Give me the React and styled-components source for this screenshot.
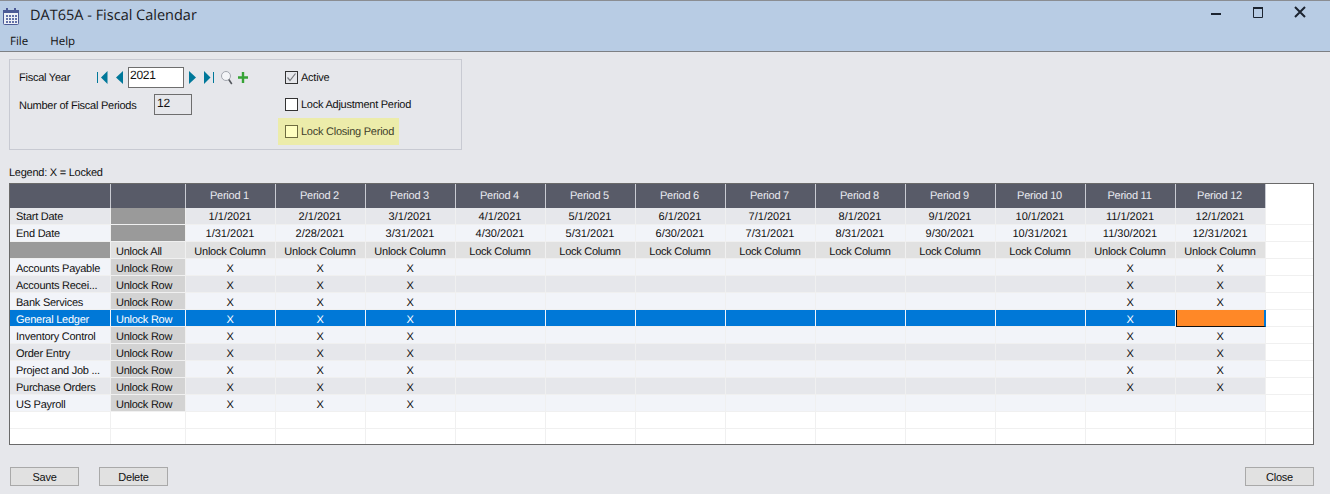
import React from 'react';
import styled, { createGlobalStyle } from 'styled-components';

const GlobalStyle = createGlobalStyle`
  html, body {
    margin: 0;
    padding: 0;
    background: #e6e7eb;
  }
  body {
    font-family: 'Liberation Sans', Arial, sans-serif;
    font-size: 11px;
    letter-spacing: -0.25px;
    text-rendering: geometricPrecision;
    color: #111;
  }
`;

const Page = styled.div`
  width: 1330px;
  height: 494px;
  overflow: hidden;
  display: flex;
  flex-direction: column;
`;

const Header = styled.div`
  height: 50px;
  background: #b8cce4;
  border-top: 1px solid #8a8d92;
  border-bottom: 1px solid #7d8084;
  flex: none;
`;

const TitleBar = styled.div`
  height: 30px;
  display: flex;
  align-items: center;
  padding-left: 3px;
`;

const Title = styled.div`
  font-family: 'Open Sans', sans-serif;
  font-size: 14.5px;
  letter-spacing: 0;
  margin: 0 0 2px 11px;
  color: #1a1a22;
  flex: 1;
`;

const WindowButton = styled.div`
  width: 42px;
  height: 24px;
  display: flex;
  align-items: center;
  justify-content: center;
  margin-bottom: 8px;
`;

const Menu = styled.div`
  display: flex;
  gap: 22px;
  padding: 3px 0 0 10px;
  font-family: 'Open Sans', sans-serif;
  font-size: 11.5px;
  letter-spacing: 0;
`;

const Panel = styled.section`
  margin: 7px 0 0 9px;
  width: 451px;
  height: 89px;
  border: 1px solid #c8cad2;
  display: flex;
  flex: none;
`;

const FieldColumn = styled.div`
  width: 268px;
  padding: 7px 0 0 9px;
  box-sizing: border-box;
  display: flex;
  flex-direction: column;
  gap: 6px;
`;

const FieldRow = styled.div`
  display: flex;
  align-items: center;
  height: 21px;
`;

const FieldLabel = styled.span`
  width: ${(p) => p.$width}px;
  margin-top: ${(p) => p.$drop || 0}px;
  flex: none;
`;

const NavGroup = styled.div`
  display: flex;
  align-items: center;
  width: 31px;
  gap: 8px;
  flex: none;
`;

const YearInput = styled.div`
  width: 56px;
  height: 21px;
  box-sizing: border-box;
  border: 1px solid #6e6e6e;
  background: #fff;
  padding-left: 1px;
  margin-right: 5px;
  font-size: 12px;
`;

const PeriodsInput = styled.div`
  width: 38px;
  height: 21px;
  box-sizing: border-box;
  border: 1px solid #6e6e6e;
  padding: 1px 0 0 2px;
  font-size: 12px;
`;

const IconSlot = styled.span`
  display: inline-flex;
  margin-right: ${(p) => p.$gap || 0}px;
`;

const CheckColumn = styled.div`
  padding-top: 4px;
  display: flex;
  flex-direction: column;
`;

const CheckRow = styled.label`
  height: 27px;
  width: 121px;
  white-space: nowrap;
  box-sizing: border-box;
  padding-left: 7px;
  display: flex;
  align-items: center;
  gap: 3px;
  background: ${(p) => (p.$highlight ? '#ececaa' : 'transparent')};
  color: ${(p) => (p.$highlight ? '#3f3f2a' : '#111')};
`;

const Box = styled.span`
  width: 11px;
  height: 11px;
  border: 1px solid ${(p) => (p.$highlight ? '#6e6c40' : '#333')};
  background: ${(p) => (p.$highlight ? '#ffffc0' : p.$checked ? '#e6e7eb' : '#fff')};
  display: inline-flex;
  flex: none;
`;

const Legend = styled.div`
  margin: 17px 0 0 9px;
  height: 16px;
  line-height: 13px;
`;

const Grid = styled.div`
  margin-left: 9px;
  width: 1303px;
  height: 260px;
  border: 1px solid #6a6a6a;
  background: #fff;
  overflow: hidden;
  flex: none;
`;

const COLUMNS = '101px 75px repeat(12, 90px) 47px';

const HeadRow = styled.div`
  display: grid;
  grid-template-columns: ${COLUMNS};
  height: 24px;
`;

const HeadCell = styled.div`
  background: #585b68;
  color: #e9eaf0;
  border-right: 1px solid #c9cbd2;
  padding-right: 2px;
  display: flex;
  align-items: center;
  justify-content: center;
`;

const Filler = styled.div`
  background: #fff;
  border-bottom: 1px solid #f0f0f0;
`;

const HeadFiller = styled.div`
  background: #fff;
`;

const Row = styled.div`
  display: grid;
  grid-template-columns: ${COLUMNS};
  height: 17px;
`;

const BodyRow = styled(Row)`
  > div {
    padding-top: 2px;
  }
`;

const rowColors = {
  odd: '#e6e7eb',
  even: '#f2f4f9',
  action: '#e1e1e1',
  selected: '#0078d7',
  blank: '#fff',
};

const Cell = styled.div`
  box-sizing: border-box;
  background: ${(p) => rowColors[p.$tone]};
  color: ${(p) => (p.$tone === 'selected' ? '#fff' : '#111')};
  border-right: 1px solid ${(p) => (p.$tone === 'selected' ? '#f2f4f9' : '#f0f0f0')};
  border-bottom: 1px solid #f0f0f0;
  padding: 1px 1px 0 0;
  text-align: center;
  line-height: 16px;
  white-space: nowrap;
  overflow: hidden;
`;

const DateCell = styled(Cell)`
  letter-spacing: 0;
`;

const NameCell = styled(Cell)`
  text-align: left;
  padding-left: 6px;
`;

const ActionCell = styled(Cell)`
  text-align: left;
  padding-left: 5px;
  background: ${(p) => (p.$tone === 'selected' || p.$tone === 'action' ? rowColors[p.$tone] : '#d3d3d3')};
`;

const MutedCell = styled(Cell)`
  background: #9a9a9a;
`;

const ActiveCell = styled.div`
  box-sizing: border-box;
  background: #ff8827;
  border-left: 1px solid #111;
  border-bottom: 1px solid #111;
  border-right: 2px solid #0078d7;
`;

const Footer = styled.div`
  display: flex;
  justify-content: space-between;
  padding: 22px 16px 0 10px;
`;

const FooterGroup = styled.div`
  display: flex;
  gap: 20px;
`;

const Button = styled.button`
  width: 69px;
  height: 19px;
  box-sizing: border-box;
  border: 1px solid #a9a9a9;
  background: #e1e1e1;
  color: #111;
  font: inherit;
  letter-spacing: inherit;
  padding: 0;
`;

const Calendar = () => (
  <svg width="16" height="17" viewBox="0 0 16 17">
    <rect x="0.5" y="2.5" width="15" height="14" rx="1" fill="#eef0f6" stroke="#4c5a96" />
    <rect x="0" y="2" width="16" height="3" fill="#4c5a96" />
    <rect x="3" y="0" width="2" height="3" fill="#4c5a96" />
    <rect x="11" y="0" width="2" height="3" fill="#4c5a96" />
    {[3, 6, 9, 12].flatMap((x) =>
      [7, 10, 13].map((y) => <rect key={`${x}-${y}`} x={x} y={y} width="2" height="2" fill="#6472a8" />)
    )}
  </svg>
);

const Minimize = () => (
  <svg width="12" height="12" viewBox="0 0 12 12">
    <rect x="1" y="7" width="10" height="2" fill="#1c2430" />
  </svg>
);

const Maximize = () => (
  <svg width="12" height="12" viewBox="0 0 12 12">
    <path d="M1.5 2.5h9v9h-9z" fill="none" stroke="#1c2430" />
    <rect x="1" y="1" width="10" height="2" fill="#1c2430" />
  </svg>
);

const CloseIcon = () => (
  <svg width="14" height="14" viewBox="0 0 14 14">
    <path d="M2 2l10 10M12 2L2 12" stroke="#1c2430" strokeWidth="2" />
  </svg>
);

const First = () => (
  <svg width="11" height="13" viewBox="0 0 11 13">
    <rect x="0" y="1" width="1" height="11" fill="#00789a" />
    <path d="M10.5 0v13L4 6.5z" fill="#00789a" />
  </svg>
);

const Prev = () => (
  <svg width="7" height="13" viewBox="0 0 7 13">
    <path d="M7 0v13L0 6.5z" fill="#00789a" />
  </svg>
);

const Next = () => (
  <svg width="7" height="13" viewBox="0 0 7 13">
    <path d="M0 0v13L7 6.5z" fill="#00789a" />
  </svg>
);

const Last = () => (
  <svg width="10" height="13" viewBox="0 0 10 13">
    <path d="M0 0v13L6.5 6.5z" fill="#00789a" />
    <rect x="9" y="1" width="1" height="11" fill="#00789a" />
  </svg>
);

const Search = () => (
  <svg width="12" height="14" viewBox="0 0 12 14">
    <circle cx="5" cy="5" r="4.5" fill="#f4f5f8" stroke="#a2a6ae" />
    <path d="M7.8 8.5l3 4.5" stroke="#55585e" strokeWidth="1.6" />
  </svg>
);

const Plus = () => (
  <svg width="10" height="11" viewBox="0 0 10 11">
    <path d="M3.8 0h2.4v4.3H10v2.4H6.2V11H3.8V6.7H0V4.3h3.8z" fill="#36a336" />
  </svg>
);

const Tick = () => (
  <svg width="11" height="11" viewBox="0 0 11 11">
    <path d="M1.5 5.5l2.5 3 5.5-7" fill="none" stroke="#77797e" strokeWidth="1.2" />
  </svg>
);

const periods = Array.from({ length: 12 }, (_, i) => i + 1);
const lastDays = [31, 28, 31, 30, 31, 30, 31, 31, 30, 31, 30, 31];
const unlocked = [1, 2, 3, 11, 12];

const apps = [
  { name: 'Accounts Payable', tone: 'even' },
  { name: 'Accounts Recei...', tone: 'odd' },
  { name: 'Bank Services', tone: 'even' },
  { name: 'General Ledger', tone: 'selected' },
  { name: 'Inventory Control', tone: 'even' },
  { name: 'Order Entry', tone: 'odd' },
  { name: 'Project and Job ...', tone: 'even' },
  { name: 'Purchase Orders', tone: 'odd' },
  { name: 'US Payroll', tone: 'even', locked: [1, 2, 3] },
];

export default function App() {
  return (
    <Page>
      <GlobalStyle />
      <Header>
        <TitleBar>
          <Calendar />
          <Title>DAT65A - Fiscal Calendar</Title>
          <WindowButton><Minimize /></WindowButton>
          <WindowButton><Maximize /></WindowButton>
          <WindowButton><CloseIcon /></WindowButton>
          <IconSlot $gap={9} />
        </TitleBar>
        <Menu>
          <span>File</span>
          <span>Help</span>
        </Menu>
      </Header>

      <Panel>
        <FieldColumn>
          <FieldRow>
            <FieldLabel $width={78}>Fiscal Year</FieldLabel>
            <NavGroup>
              <First />
              <Prev />
            </NavGroup>
            <YearInput>2021</YearInput>
            <IconSlot $gap={8}><Next /></IconSlot>
            <IconSlot $gap={7}><Last /></IconSlot>
            <IconSlot $gap={5}><Search /></IconSlot>
            <Plus />
          </FieldRow>
          <FieldRow>
            <FieldLabel $width={135} $drop={2}>Number of Fiscal Periods</FieldLabel>
            <PeriodsInput>12</PeriodsInput>
          </FieldRow>
        </FieldColumn>
        <CheckColumn>
          <CheckRow>
            <Box $checked><Tick /></Box>
            Active
          </CheckRow>
          <CheckRow>
            <Box />
            Lock Adjustment Period
          </CheckRow>
          <CheckRow $highlight>
            <Box $highlight />
            Lock Closing Period
          </CheckRow>
        </CheckColumn>
      </Panel>

      <Legend>Legend: X = Locked</Legend>

      <Grid>
        <HeadRow>
          <HeadCell />
          <HeadCell />
          {periods.map((p) => (
            <HeadCell key={p}>Period {p}</HeadCell>
          ))}
          <HeadFiller />
        </HeadRow>

        <Row>
          <NameCell $tone="odd">Start Date</NameCell>
          <MutedCell $tone="odd" />
          {periods.map((p) => (
            <DateCell key={p} $tone="odd">{p}/1/2021</DateCell>
          ))}
          <Filler />
        </Row>
        <Row>
          <NameCell $tone="even">End Date</NameCell>
          <MutedCell $tone="even" />
          {periods.map((p) => (
            <DateCell key={p} $tone="even">{p}/{lastDays[p - 1]}/2021</DateCell>
          ))}
          <Filler />
        </Row>
        <BodyRow>
          <MutedCell $tone="action" />
          <ActionCell $tone="action">Unlock All</ActionCell>
          {periods.map((p) => (
            <Cell key={p} $tone="action">
              {unlocked.includes(p) ? 'Unlock Column' : 'Lock Column'}
            </Cell>
          ))}
          <Filler />
        </BodyRow>

        {apps.map((app) => (
          <BodyRow key={app.name}>
            <NameCell $tone={app.tone}>{app.name}</NameCell>
            <ActionCell $tone={app.tone}>Unlock Row</ActionCell>
            {periods.map((p) => {
              if (app.tone === 'selected' && p === 12) return <ActiveCell key={p} />;
              const locked = (app.locked || unlocked).includes(p);
              return <Cell key={p} $tone={app.tone}>{locked ? 'X' : ''}</Cell>;
            })}
            <Filler />
          </BodyRow>
        ))}

        {[0, 1].map((i) => (
          <Row key={i}>
            <Cell $tone="blank" />
            <Cell $tone="blank" />
            {periods.map((p) => (
              <Cell key={p} $tone="blank" />
            ))}
            <Filler />
          </Row>
        ))}
      </Grid>

      <Footer>
        <FooterGroup>
          <Button>Save</Button>
          <Button>Delete</Button>
        </FooterGroup>
        <Button>Close</Button>
      </Footer>
    </Page>
  );
}
